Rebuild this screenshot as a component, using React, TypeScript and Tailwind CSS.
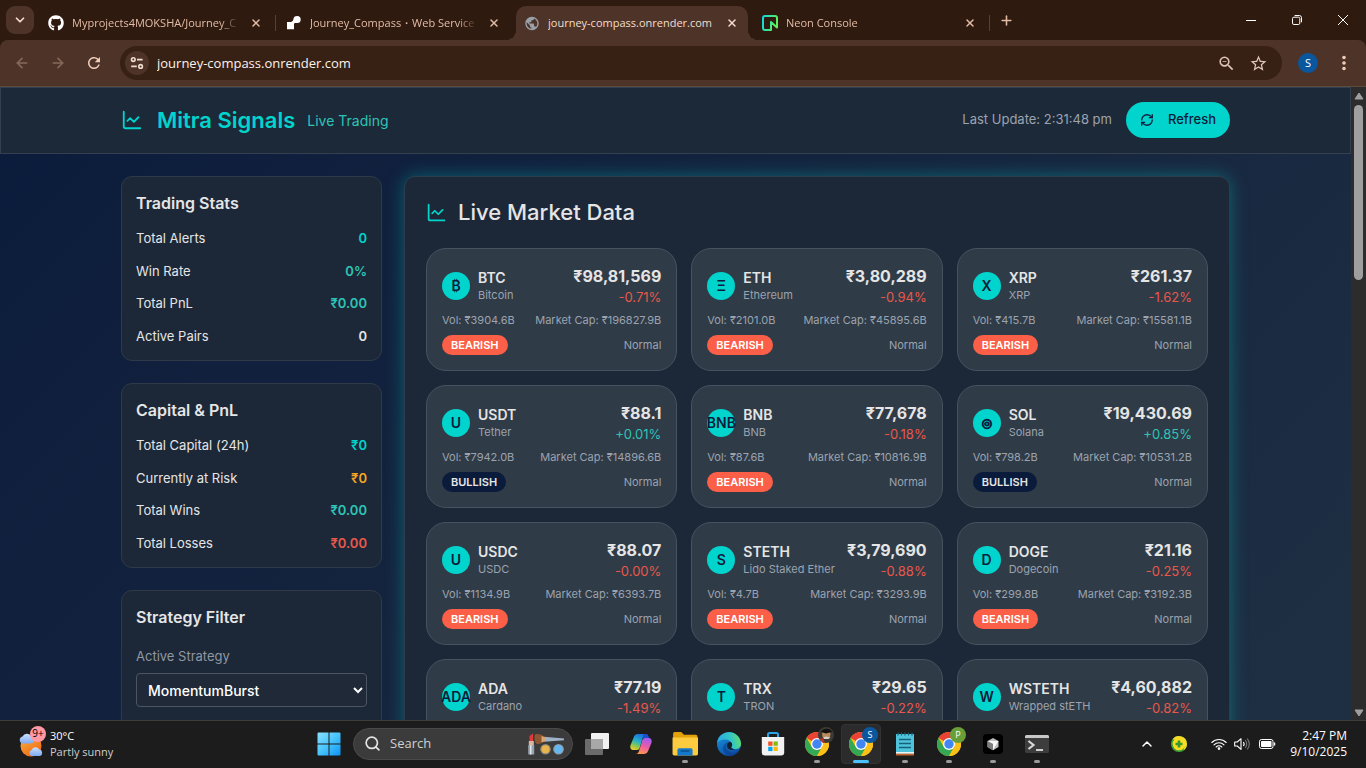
import React from "react";
import {
  ArrowLeft,
  ArrowRight,
  ChartLine,
  ChevronDown,
  ChevronUp,
  Plus,
  RefreshCw,
  Search,
  X,
} from "lucide-react";
import { FaGithub } from "react-icons/fa";
import { MdOutlineZoomOut, MdPublic, MdRefresh, MdStarOutline } from "react-icons/md";

const UI_FONT = "font-['Open_Sans','Noto_Sans',sans-serif]";

/* ---------- Browser chrome ---------- */

function RenderMark() {
  return (
    <svg viewBox="0 0 16 16" className="size-4" aria-hidden="true">
      <path
        fill="#fff"
        d="M11.2 1a3.9 3.9 0 0 0-3.9 3.4c-.2 1.1-.9 2-2 2.4-.4.1-.7.2-1.1.2H1v7.2h7V9.4c0-.9.7-1.4 1.6-1.4h1.6a3.5 3.5 0 0 0 0-7Z"
      />
    </svg>
  );
}

function NeonMark() {
  return (
    <svg viewBox="0 0 16 16" className="size-4" aria-hidden="true">
      <defs>
        <linearGradient id="neon" x1="0" y1="0" x2="1" y2="0.3">
          <stop offset="0" stopColor="#12d6dc" />
          <stop offset="1" stopColor="#5df05a" />
        </linearGradient>
      </defs>
      <path
        d="M9 15H3a2 2 0 0 1-2-2V3a2 2 0 0 1 2-2h10a2 2 0 0 1 2 2v9.6L9 7Z"
        fill="none"
        stroke="url(#neon)"
        strokeWidth="2"
        strokeLinejoin="round"
      />
    </svg>
  );
}

type TabProps = { icon: React.ReactNode; title: string; active?: boolean; divider?: boolean };

function Tab({ icon, title, active, divider }: TabProps) {
  return (
    <div className="flex h-[34px] w-[238px] min-w-0 items-center">
      <div
        className={
          active
            ? "relative flex h-full min-w-0 flex-1 items-center rounded-t-[10px] bg-[#4e3428] pr-2 pl-2 text-[#f3ddd0]"
            : "flex h-full min-w-0 flex-1 items-center pr-2 pl-2 text-[#e2bca6]"
        }
      >
        {active && (
          <>
            <span className="absolute bottom-0 -left-[10px] size-[10px] bg-[radial-gradient(circle_at_0_0,transparent_10px,#4e3428_10px)]" />
            <span className="absolute -right-[10px] bottom-0 size-[10px] bg-[radial-gradient(circle_at_100%_0,transparent_10px,#4e3428_10px)]" />
          </>
        )}
        <span className="mr-2 flex size-4 shrink-0 items-center justify-center">{icon}</span>
        <span
          className={
            active
              ? "mr-2 min-w-0 flex-1 overflow-hidden text-[11px] leading-6 whitespace-nowrap"
              : "mr-2 min-w-0 flex-1 overflow-hidden text-[11px] leading-6 whitespace-nowrap mask-[linear-gradient(to_right,#000_88%,transparent)]"
          }
        >
          {title}
        </span>
        <button type="button" aria-label="Close tab" className="flex h-5 w-4 shrink-0 items-center justify-center">
          <X className="size-3" strokeWidth={3} />
        </button>
      </div>
      <span className="flex w-[6px] justify-center">
        {divider && <span className="h-4 w-px bg-[#5b3f31]" />}
      </span>
    </div>
  );
}

function TabStrip() {
  return (
    <div className="flex h-10 items-start bg-[#2f1a0f] pt-[6px] pl-[6px]">
      <button
        type="button"
        aria-label="Search tabs"
        className="mr-[6px] flex size-7 shrink-0 items-center justify-center rounded-[9px] bg-[#4e3428] text-[#f3ddd0]"
      >
        <ChevronDown className="size-[14px]" strokeWidth={3} />
      </button>
      <div className="flex min-w-0 items-end">
        <Tab icon={<FaGithub className="size-4 text-white" />} title="Myprojects4MOKSHA/Journey_C" divider />
        <Tab icon={<RenderMark />} title="Journey_Compass・Web Service" />
        <Tab icon={<MdPublic className="size-[17px] text-[#9aa0a8]" />} title="journey-compass.onrender.com" active />
        <Tab icon={<NeonMark />} title="Neon Console" divider />
      </div>
      <button type="button" aria-label="New tab" className="flex size-7 shrink-0 items-center justify-center text-[#e2bca6]">
        <Plus className="size-[15px]" strokeWidth={2.5} />
      </button>
      <div className="ml-auto flex text-white">
        <button type="button" aria-label="Minimize" className="flex h-7 w-[46px] items-center justify-center">
          <svg viewBox="0 0 10 10" className="size-[10px]"><path d="M0 5.5h10" stroke="currentColor" /></svg>
        </button>
        <button type="button" aria-label="Restore" className="flex h-7 w-[46px] items-center justify-center">
          <svg viewBox="0 0 10 10" className="size-[10px]" fill="none" stroke="currentColor">
            <rect x="0.5" y="2.2" width="7.3" height="7.3" rx="1.4" />
            <path d="M2.6 .5h4.7a2.2 2.2 0 0 1 2.2 2.2v4.6" />
          </svg>
        </button>
        <button type="button" aria-label="Close" className="flex h-7 w-[46px] items-center justify-center">
          <svg viewBox="0 0 10 10" className="size-[10px]"><path d="M0 0l10 10M10 0L0 10" stroke="currentColor" /></svg>
        </button>
      </div>
    </div>
  );
}

function Toolbar() {
  return (
    <div className="flex h-[47px] items-center rounded-t-[8px] border-b border-[#5c4a3c] bg-[#4e3428] pl-1">
      <button type="button" aria-label="Back" className="flex w-9 justify-center text-[#87695b]">
        <ArrowLeft className="size-4" strokeWidth={2.4} />
      </button>
      <button type="button" aria-label="Forward" className="flex w-9 justify-center text-[#87695b]">
        <ArrowRight className="size-4" strokeWidth={2.4} />
      </button>
      <button type="button" aria-label="Reload" className="flex w-9 justify-center text-[#f0cdb9]">
        <MdRefresh className="size-[18px]" />
      </button>
      <div className="ml-2 flex h-[34px] min-w-0 flex-1 items-center rounded-full bg-[#372114] pr-2 pl-[5px] text-[#dcc5b8]">
        <button type="button" aria-label="Site information" className="flex size-6 shrink-0 items-center justify-center rounded-full bg-[#4e3428]">
          <svg viewBox="0 0 14 14" className="size-[14px]" fill="none" stroke="#f0ddd2" strokeWidth="1.6">
            <circle cx="3.3" cy="3.6" r="1.8" />
            <path d="M7 3.6h5.6M1.2 10.4h5.6" />
            <circle cx="10.6" cy="10.4" r="1.8" />
          </svg>
        </button>
        <input
          aria-label="Address"
          defaultValue="journey-compass.onrender.com"
          className="ml-2 h-6 min-w-0 flex-1 bg-transparent text-[13px] text-[#fdf1ea] outline-none"
        />
        <button type="button" aria-label="Zoom" className="flex w-8 justify-center">
          <MdOutlineZoomOut className="size-[19px]" />
        </button>
        <button type="button" aria-label="Bookmark" className="flex w-8 justify-center">
          <MdStarOutline className="size-[19px]" />
        </button>
      </div>
      <button type="button" aria-label="Profile" className="ml-4 flex size-5 items-center justify-center rounded-full bg-[#0a579f] text-[11px] text-white">
        S
      </button>
      <button type="button" aria-label="Menu" className="flex w-[48px] justify-center pl-1 text-[#f0cdb9]">
        <svg viewBox="0 0 4 16" className="h-4 w-1" fill="currentColor">
          <circle cx="2" cy="2.5" r="1.8" /><circle cx="2" cy="8" r="1.8" /><circle cx="2" cy="13.5" r="1.8" />
        </svg>
      </button>
    </div>
  );
}

/* ---------- Page ---------- */

function PageHeader() {
  return (
    <header className="border border-[#343f50] bg-[#1c2939]">
      <div className="mx-auto flex max-w-[1153px] items-center px-[22px] pt-[14px] pb-[15px]">
        <ChartLine className="size-[22px] text-[#00d4cc]" strokeWidth={2} />
        <h1 className="ml-[14px] text-[22px] leading-9 font-semibold text-[#00d4cc]">Mitra Signals</h1>
        <span className="ml-3 text-[14px] text-[#2ec4b6]">Live Trading</span>
        <span className="ml-auto text-[13px] text-[#9ca3af]">Last Update: 2:31:48 pm</span>
        <button type="button" className="ml-[14px] flex h-9 items-center rounded-full bg-[#00d4cc] px-[14px] text-[13px] font-medium text-[#0b1b3b]">
          <RefreshCw className="mr-[14px] size-[14px]" strokeWidth={2.2} />
          Refresh
        </button>
      </div>
    </header>
  );
}

type Stat = { label: string; value: string; tone: string };

const tradingStats: Stat[] = [
  { label: "Total Alerts", value: "0", tone: "text-[#00d4cc]" },
  { label: "Win Rate", value: "0%", tone: "text-[#2ec4b6]" },
  { label: "Total PnL", value: "₹0.00", tone: "text-[#2ec4b6]" },
  { label: "Active Pairs", value: "0", tone: "text-[#e5e5e5]" },
];

const capitalStats: Stat[] = [
  { label: "Total Capital (24h)", value: "₹0", tone: "text-[#00d4cc]" },
  { label: "Currently at Risk", value: "₹0", tone: "text-[#f5a623]" },
  { label: "Total Wins", value: "₹0.00", tone: "text-[#2ec4b6]" },
  { label: "Total Losses", value: "₹0.00", tone: "text-[#e8584a]" },
];

const SIDE_CARD = "rounded-[11px] border border-[#2e3a47] bg-[#1c2838] p-[14px]";

function StatCard({ title, stats }: { title: string; stats: Stat[] }) {
  return (
    <section className={SIDE_CARD}>
      <h2 className="text-[16px] leading-6 font-semibold">{title}</h2>
      <dl className="mt-[13px] flex h-[118px] flex-col justify-between text-[13px] leading-5">
        {stats.map((s) => (
          <div key={s.label} className="flex justify-between">
            <dt className="text-[#e5e5e5]">{s.label}</dt>
            <dd className={s.tone + " font-semibold"}>{s.value}</dd>
          </div>
        ))}
      </dl>
    </section>
  );
}

function StrategyCard() {
  return (
    <section className={SIDE_CARD}>
      <h2 className="text-[16px] leading-6 font-semibold">Strategy Filter</h2>
      <label htmlFor="strategy" className="mt-[17px] block text-[13px] leading-5 text-[#9097a1]">
        Active Strategy
      </label>
      <select
        id="strategy"
        className="mt-[7px] h-[34px] w-full rounded-[4px] border border-[#4b5563] bg-[#1f2937] px-[7px] text-[14px] font-medium text-white"
      >
        <option>MomentumBurst</option>
      </select>
      <div className="h-20" />
    </section>
  );
}

type Coin = [glyph: string, symbol: string, name: string, price: string, change: string, vol: string, cap: string, bullish?: boolean];

const coins: Coin[] = [
  ["₿", "BTC", "Bitcoin", "₹98,81,569", "-0.71%", "₹3904.6B", "₹196827.9B"],
  ["Ξ", "ETH", "Ethereum", "₹3,80,289", "-0.94%", "₹2101.0B", "₹45895.6B"],
  ["X", "XRP", "XRP", "₹261.37", "-1.62%", "₹415.7B", "₹15581.1B"],
  ["U", "USDT", "Tether", "₹88.1", "+0.01%", "₹7942.0B", "₹14896.6B", true],
  ["BNB", "BNB", "BNB", "₹77,678", "-0.18%", "₹87.6B", "₹10816.9B"],
  ["◎", "SOL", "Solana", "₹19,430.69", "+0.85%", "₹798.2B", "₹10531.2B", true],
  ["U", "USDC", "USDC", "₹88.07", "-0.00%", "₹1134.9B", "₹6393.7B"],
  ["S", "STETH", "Lido Staked Ether", "₹3,79,690", "-0.88%", "₹4.7B", "₹3293.9B"],
  ["D", "DOGE", "Dogecoin", "₹21.16", "-0.25%", "₹299.8B", "₹3192.3B"],
  ["ADA", "ADA", "Cardano", "₹77.19", "-1.49%", "₹98.4B", "₹2764.5B"],
  ["T", "TRX", "TRON", "₹29.65", "-0.22%", "₹74.1B", "₹2807.0B"],
  ["W", "WSTETH", "Wrapped stETH", "₹4,60,882", "-0.82%", "₹2.9B", "₹1496.3B"],
];

function CoinCard({ coin }: { coin: Coin }) {
  const [glyph, symbol, name, price, change, vol, cap, bullish] = coin;
  return (
    <article className="rounded-[20px] border border-[#475260] bg-[#2f3b47] px-[15px] pt-[15px] pb-[15px]">
      <div className="flex items-center justify-between">
        <div className="flex items-center gap-2">
          <span
            className={
              glyph === "◎"
                ? "flex size-7 items-center justify-center rounded-full bg-[#00d4cc] font-['DejaVu_Sans',sans-serif] text-[12px] font-bold text-[#0b1b3b] [-webkit-text-stroke:1px_#0b1b3b]"
                : "flex size-7 items-center justify-center rounded-full bg-[#00d4cc] text-[14px] font-semibold text-[#0b1b3b]"
            }
          >
            {glyph}
          </span>
          <div>
            <h3 className="text-[14px] leading-[19px] font-semibold">{symbol}</h3>
            <p className="text-[11px] leading-4 text-[#9ca3af]">{name}</p>
          </div>
        </div>
        <div className="text-right">
          <p className="text-[16px] leading-6 font-bold">{price}</p>
          <p className={bullish ? "text-[13px] leading-[19px] text-[#2ec4b6]" : "text-[13px] leading-[19px] text-[#e8584a]"}>
            {change}
          </p>
        </div>
      </div>
      <div className="mt-[5px] flex justify-between text-[11px] leading-4 text-[#9ca3af]">
        <span>Vol: {vol}</span>
        <span>Market Cap: {cap}</span>
      </div>
      <div className="mt-[7px] flex items-center justify-between text-[11px] leading-5">
        <span
          className={
            bullish
              ? "rounded-full bg-[#0b1b3b] px-[9px] font-semibold text-[#e5e5e5]"
              : "rounded-full bg-[#fb5f48] px-[9px] font-semibold text-white"
          }
        >
          {bullish ? "BULLISH" : "BEARISH"}
        </span>
        <span className="text-[#9ca3af]">Normal</span>
      </div>
    </article>
  );
}

function Dashboard() {
  return (
    <div className="min-w-0 flex-1 overflow-hidden bg-[linear-gradient(135deg,#0b1b3b_0%,#1f2f43_100%)] font-['Inter','Liberation_Sans',sans-serif] text-[#e5e5e5]">
      <PageHeader />
      <main className="mx-auto mt-[22px] grid max-w-[1153px] grid-cols-[261px_minmax(0,1fr)] items-start gap-[22px] px-[22px]">
        <div className="flex flex-col gap-[22px]">
          <StatCard title="Trading Stats" stats={tradingStats} />
          <StatCard title="Capital & PnL" stats={capitalStats} />
          <StrategyCard />
        </div>
        <section className="rounded-[11px] border border-[#2b3d4c] bg-[#1c2838] px-[21px] pt-5 pb-[21px] shadow-[0_0_18px_rgba(0,212,204,0.35)]">
          <h2 className="flex items-center gap-[11px] text-[22px] leading-[30px] font-medium">
            <ChartLine className="size-[21px] text-[#00d4cc]" strokeWidth={2} />
            Live Market Data
          </h2>
          <div className="mt-[21px] grid grid-cols-3 gap-[14px]">
            {coins.map((c) => (
              <CoinCard key={c[1]} coin={c} />
            ))}
          </div>
        </section>
      </main>
    </div>
  );
}

function ScrollBar() {
  return (
    <div className="flex w-[15px] shrink-0 flex-col items-center bg-[#2c2c2c] pt-[5px] pb-[3px] text-[#9f9f9f]" aria-hidden="true">
      <svg viewBox="0 0 10 8" className="h-2 w-[10px]"><path d="M5 1 9 7H1Z" fill="currentColor" stroke="currentColor" strokeLinejoin="round" /></svg>
      <div className="mt-[5px] h-[175px] w-[9px] rounded-full bg-[#9f9f9f]" />
      <svg viewBox="0 0 10 8" className="mt-auto h-2 w-[10px]"><path d="M5 7 9 1H1Z" fill="currentColor" stroke="currentColor" strokeLinejoin="round" /></svg>
    </div>
  );
}

/* ---------- Taskbar ---------- */

function WeatherIcon() {
  return (
    <svg viewBox="0 0 28 28" className="size-7" aria-hidden="true">
      <defs>
        <linearGradient id="sun" x1="0" y1="0" x2="0.6" y2="1"><stop offset="0" stopColor="#fbb53c" /><stop offset="1" stopColor="#ee6a1a" /></linearGradient>
        <linearGradient id="cloud" x1="0" y1="0" x2="0" y2="1"><stop offset="0" stopColor="#c9e0ff" /><stop offset="1" stopColor="#7fa9f0" /></linearGradient>
      </defs>
      <circle cx="13" cy="16" r="10.500" fill="url(#sun)" />
      <path d="M4.500 13.500a3.600 3.600 0 0 1 0-7 5 5 0 0 1 9 .4 3.400 3.400 0 0 1 .4 6.600Z" fill="url(#cloud)" />
      <path d="M13.500 26a3.200 3.200 0 0 1 0-6 4.200 4.200 0 0 1 7.700-.4A3.300 3.300 0 0 1 22 26Z" fill="url(#cloud)" />
    </svg>
  );
}

function WindowsLogo() {
  return (
    <svg viewBox="0 0 24 24" className="size-6">
      <defs><linearGradient id="win" gradientUnits="userSpaceOnUse" x1="0" y1="0" x2="24" y2="24"><stop offset="0" stopColor="#8be3ff" /><stop offset="0.5" stopColor="#48c4fb" /><stop offset="1" stopColor="#0a92f5" /></linearGradient></defs>
      <path fill="url(#win)" d="M.5 1.500a1 1 0 0 1 1-1h10v11H.5Zm12-1h10a1 1 0 0 1 1 1v10h-11ZM.5 12.500h11v11h-10a1 1 0 0 1-1-1Zm12 0h11v10a1 1 0 0 1-1 1h-10Z" />
    </svg>
  );
}

function Gleam() {
  return (
    <svg viewBox="0 0 38 22" className="h-[22px] w-[38px]" aria-hidden="true">
      <path d="M2.500 3 6 .5V8H2.500Z" fill="#e03a3a" />
      <rect x="1.800" y="8" width="5" height="4" fill="#d9b6a0" />
      <rect x="1.200" y="12" width="6" height="9.500" rx=".6" fill="#98a2ad" />
      <rect x="3" y="12" width="1.500" height="9.500" fill="#dfe5ea" />
      <path d="M17 3.800 37 5.600v1.600L17 8.800Z" fill="#9fb3c8" />
      <path d="M8 1.500c4-1.500 8 1 10 2.700v4c-2.500 1-5 3.500-8.500 2.600C7.500 9 7 4 8 1.500Z" fill="#8d5630" />
      <path d="M14.500 3 18 4.200v4L14.500 9.500Z" fill="#d6a571" />
      <circle cx="18.500" cy="16.200" r="5.300" fill="#8e887c" /><circle cx="18.500" cy="16.200" r="4" fill="#e8b44c" />
      <circle cx="31.500" cy="16.200" r="5.300" fill="#8aa0b3" /><circle cx="31.500" cy="16.200" r="4" fill="#63b8f2" />
    </svg>
  );
}

function TaskViewIcon() {
  return (
    <svg viewBox="0 0 24 24" className="size-6">
      <rect x="6" y="1" width="18" height="16" rx="1" fill="#f1f1f1" />
      <rect x="0" y="7" width="18" height="16" rx="1" fill="#6b6b6b" />
      <path d="M6 7h12v10H6Z" fill="#a8a8a8" />
    </svg>
  );
}

function CopilotIcon() {
  return (
    <svg viewBox="0 0 24 24" className="size-6">
      <defs>
        <linearGradient id="cpA" x1="0.6" y1="0" x2="0.2" y2="1"><stop offset="0" stopColor="#1b6fe0" /><stop offset="0.45" stopColor="#25b3c9" /><stop offset="0.75" stopColor="#8fcb4a" /><stop offset="1" stopColor="#f5c92e" /></linearGradient>
        <linearGradient id="cpB" x1="0.6" y1="0" x2="0.3" y2="1"><stop offset="0" stopColor="#a05cf0" /><stop offset="0.5" stopColor="#ee5aa6" /><stop offset="1" stopColor="#fb9a4c" /></linearGradient>
      </defs>
      <path d="M15.500 2H8.700C6.500 2 5.300 3.600 4.700 5.400L1.600 13c-1 3 .4 5 3 5H8c1.500 0 2.300-1 2.700-2.300L14 5c.6-2 1.500-3 3.300-3Z" fill="url(#cpA)" />
      <path d="M8.500 22h6.800c2.200 0 3.400-1.600 4-3.400l3.100-7.600c1-3-.4-5-3-5H16c-1.500 0-2.300 1-2.700 2.300L10 19c-.6 2-1.500 3-3.300 3Z" fill="url(#cpB)" />
      <path d="M14 5c.6-2 1.500-3 3.300-3 1.600 0 2.300 2 2.700 4h-4c-1.300 0-2 .6-2.500 1.600Z" fill="#1c4fd0" />
    </svg>
  );
}

function FolderIcon() {
  return (
    <svg viewBox="0 0 24 24" className="size-[26px]">
      <path d="M1 2.500a1.500 1.500 0 0 1 1.500-1.500h6L11 3.500h11A1.500 1.500 0 0 1 23.500 5v5H1Z" fill="#e3a008" />
      <path d="M.5 6h23.500v15a1.500 1.500 0 0 1-1.500 1.500H2A1.500 1.500 0 0 1 .5 21Z" fill="#fccb3f" />
      <path d="M5 22.500v-5A1.500 1.500 0 0 1 6.500 16h11a1.500 1.500 0 0 1 1.500 1.500v5Z" fill="#1579c9" />
      <path d="M8.500 18.500h7" stroke="#0b4f8c" strokeWidth="1.300" strokeLinecap="round" />
    </svg>
  );
}

function EdgeIcon() {
  return (
    <svg viewBox="0 0 24 24" className="size-6">
      <defs>
        <linearGradient id="edA" x1="0" y1="0.4" x2="1" y2="0.2"><stop offset="0" stopColor="#2aa9e8" /><stop offset="0.6" stopColor="#35c8c0" /><stop offset="1" stopColor="#69e255" /></linearGradient>
        <linearGradient id="edB" x1="0" y1="0" x2="0.5" y2="1"><stop offset="0" stopColor="#1a9be0" /><stop offset="1" stopColor="#0d4fa8" /></linearGradient>
      </defs>
      <circle cx="12" cy="12" r="12" fill="url(#edB)" />
      <path d="M.1 10.700A12 12 0 0 1 24 12c0 3.300-2.500 5.200-5.500 5.200-3.200 0-4.600-1.200-4.200-2.200 1-1.300 1-2.500.6-3.600C14 8.800 11.300 7.400 8 7.400c-3.600 0-6.600 1.400-7.900 3.300Z" fill="url(#edA)" />
      <path d="M12 10c-3 1.400-3.600 5-2 7.600 2 3 6.500 4.400 11.300 2A12 12 0 0 1 12.500 24C7 22.500 5.300 18 6.500 14.500 7.300 12 9.500 10.200 12 10Z" fill="#0b3f8f" opacity=".65" />
      <path d="M14.300 15c1-1.300 1-2.500.6-3.600-.5-1-1.500-1.500-2.700-1.400-2 1.200-2.600 3.200-2 5.200 1 2.300 4 3.400 8 2-2.800 0-4.300-1.200-3.900-2.200Z" fill="#17212c" />
    </svg>
  );
}

function StoreIcon() {
  return (
    <svg viewBox="0 0 24 24" className="size-6">
      <path d="M7 6V2.500A1.500 1.500 0 0 1 8.500 1h7A1.500 1.500 0 0 1 17 2.500V6" fill="none" stroke="#2aa3e8" strokeWidth="2" />
      <path d="M.8 5h22.400v15.500a3 3 0 0 1-3 3H3.800a3 3 0 0 1-3-3Z" fill="#f2f2f2" />
      <path d="M7.200 9.500h4.300v4.300H7.200Z" fill="#f35325" /><path d="M12.500 9.500h4.300v4.300h-4.300Z" fill="#81bc06" />
      <path d="M7.200 14.800h4.300v4.300H7.200Z" fill="#05a6f0" /><path d="M12.500 14.800h4.300v4.300h-4.300Z" fill="#ffba08" />
    </svg>
  );
}

function ChromeIcon() {
  return (
    <svg viewBox="0 0 24 24" className="size-6">
      <circle cx="12" cy="12" r="12" fill="#fbc116" />
      <path d="M12 12 1.600 6A12 12 0 0 1 22.400 6H12Z" fill="#ea4335" />
      <path d="M1.600 6A12 12 0 0 0 12 24l5.200-9L12 12 6.800 15Z" fill="#34a853" />
      <path d="M22.400 6H12v6l5.200 3L12 24A12 12 0 0 0 22.400 6Z" fill="#fbc116" />
      <circle cx="12" cy="12" r="6" fill="#fff" /><circle cx="12" cy="12" r="4.700" fill="#4285f4" />
    </svg>
  );
}

function NotepadIcon() {
  return (
    <svg viewBox="0 0 20 24" className="h-6 w-5">
      <path d="M1 2h18v20H1Z" fill="#4fc3dc" />
      <path d="M1 20h18v1.700H1Z" fill="#f2f2f2" /><path d="M1 21.700h18v1.800H1Z" fill="#c0622d" />
      <path d="M4 7.500h12M4 11.500h12M4 15.500h12" stroke="#14617a" strokeWidth="1.500" />
      <path d="M3 .5v3M6.500.5v3M10 .5v3M13.500.5v3M17 .5v3" stroke="#14617a" strokeWidth="1.200" />
    </svg>
  );
}

function CursorIcon() {
  return (
    <svg viewBox="0 0 20 20" className="size-5">
      <rect width="20" height="20" rx="4" fill="#000" />
      <path d="m10 4 5.500 3v6L10 16.200 4.500 13V7Z" fill="#bdbdbd" />
      <path d="M4.500 7h11L10 16.200V10Z" fill="#f5f5f5" /><path d="M4.500 7 10 10v6.200L4.500 13Z" fill="#7d7d7d" />
    </svg>
  );
}

function TerminalIcon() {
  return (
    <svg viewBox="0 0 24 20" className="h-5 w-6">
      <rect width="24" height="18" y="1" rx="1.500" fill="#3d3d3d" />
      <path d="M0 2.500A1.500 1.500 0 0 1 1.500 1h21A1.500 1.500 0 0 1 24 2.500V4H0Z" fill="#c8c8c8" />
      <path d="m3.500 7 5 4-5 4" fill="none" stroke="#d8d8d8" strokeWidth="2.200" />
      <path d="M11 16h7" stroke="#fff" strokeWidth="1.500" />
    </svg>
  );
}

type AppProps = { label: string; children: React.ReactNode; running?: boolean; active?: boolean; badge?: React.ReactNode };

function TaskApp({ label, children, running, active, badge }: AppProps) {
  return (
    <button type="button" aria-label={label} className="relative flex h-[45px] w-11 items-center justify-center">
      {active && <span className="absolute inset-x-[2px] top-[3px] bottom-[2px] rounded-[4px] border border-[#333] bg-[#2b2b2b]" />}
      <span className="relative">{children}</span>
      {badge && <span className="absolute top-[6px] right-[5px]">{badge}</span>}
      {running && <span className="absolute bottom-[3px] h-[3px] w-[6px] rounded-full bg-[#9a9a9a]" />}
      {active && <span className="absolute bottom-[3px] h-[3px] w-4 rounded-full bg-[#4cc2ff]" />}
    </button>
  );
}

function PortraitBadge() {
  return (
    <svg viewBox="0 0 16 16" className="size-4">
      <circle cx="8" cy="8" r="8" fill="#3c3a35" />
      <path d="M4 6.500c1-3.500 7-4 8.500-.5l-.5 4-4 2-3.500-2Z" fill="#b98a5c" />
      <path d="M3 5c2-4 9-4.500 11 0L8 6.500Z" fill="#14120f" />
      <path d="M5 10.500 8 9.500l4.500 1-2 1.500H6Z" fill="#d9cfc4" /><path d="M1.500 12 5 11l2 5H5Z" fill="#b5332d" />
    </svg>
  );
}

function Taskbar() {
  return (
    <footer className="flex h-12 shrink-0 items-center border-t border-[#3d3d3a] bg-[#1c1c1c] pb-[2px] text-[12px] text-white">
      <div className="flex min-w-0 flex-1 items-center pl-[18px]">
        <div className="relative">
          <WeatherIcon />
          <span className="absolute -top-1 left-3 flex size-4 items-center justify-center rounded-full bg-[#ff99a4] text-[10px] text-black">9+</span>
        </div>
        <div className="ml-1 text-[11px] leading-4">
          <p>30°C</p>
          <p className="text-[#cfcfcf]">Partly sunny</p>
        </div>
      </div>
      <div className="flex items-center pl-px">
        <TaskApp label="Start"><WindowsLogo /></TaskApp>
        <label className="mx-[2px] flex h-8 w-[220px] items-center rounded-full border border-[#4a4a4a] bg-[#3b3b3b] pr-[7px] pl-[10px]">
          <Search className="size-[17px] shrink-0 text-[#e4e4e4]" strokeWidth={2.4} />
          <input aria-label="Search" placeholder="Search" className="ml-[9px] min-w-0 flex-1 bg-transparent text-[13px] outline-none placeholder:text-[#d0d0d0]" />
          <Gleam />
        </label>
        <TaskApp label="Task view"><TaskViewIcon /></TaskApp>
        <TaskApp label="Copilot"><CopilotIcon /></TaskApp>
        <TaskApp label="File Explorer" running><FolderIcon /></TaskApp>
        <TaskApp label="Edge"><EdgeIcon /></TaskApp>
        <TaskApp label="Store"><StoreIcon /></TaskApp>
        <TaskApp label="Chrome" running badge={<PortraitBadge />}><ChromeIcon /></TaskApp>
        <TaskApp
          label="Chrome, S profile"
          active
          badge={<span className="flex size-4 items-center justify-center rounded-full bg-[#0a579f] text-[9px] leading-3">S</span>}
        >
          <ChromeIcon />
        </TaskApp>
        <TaskApp label="Notepad" running><NotepadIcon /></TaskApp>
        <TaskApp
          label="Chrome, P profile"
          running
          badge={<span className="flex size-4 items-center justify-center rounded-full bg-[#689f38] text-[9px] leading-3">P</span>}
        >
          <ChromeIcon />
        </TaskApp>
        <TaskApp label="Cursor" running><CursorIcon /></TaskApp>
        <TaskApp label="Terminal" running><TerminalIcon /></TaskApp>
      </div>
      <div className="flex min-w-0 flex-1 items-center justify-end pr-[19px]">
        <ChevronUp className="size-4" strokeWidth={2.2} />
        <svg viewBox="0 0 16 16" className="ml-4 size-4">
          <circle cx="8" cy="8" r="8" fill="#3fa535" />
          <path d="M1.500 3.500A8 8 0 0 1 16 8c0 3-1.500 5-3.500 6.500C15 8 11 3 1.500 3.500Z" fill="#f6d92b" />
          <circle cx="8" cy="8" r="6.300" fill="#fbdc20" />
          <path d="M8 4.500v7M4.500 8h7" stroke="#2f9a34" strokeWidth="2.600" />
        </svg>
        <svg viewBox="0 0 16 12" className="ml-6 h-3 w-4" fill="none" stroke="#fff" strokeWidth="1.100" strokeLinecap="round">
          <path d="M.8 4.500a10.200 10.200 0 0 1 14.400 0M3 6.800a7 7 0 0 1 10 0M5.200 9a4 4 0 0 1 5.600 0" />
          <circle cx="8" cy="10.600" r=".8" fill="#fff" />
        </svg>
        <svg viewBox="0 0 16 14" className="ml-[7px] h-[14px] w-4" fill="none" stroke="#fff" strokeWidth="1.100" strokeLinejoin="round">
          <path d="M.7 5v4h2.600L7 12.300V1.700L3.300 5Z" />
          <path d="M9.300 5a3 3 0 0 1 0 4" />
          <path d="M11.200 3.200a5.500 5.500 0 0 1 0 7.600M13.200 1.600a8 8 0 0 1 0 10.800" stroke="#777" />
        </svg>
        <svg viewBox="0 0 17 10" className="ml-[9px] h-[10px] w-[17px]" fill="none" stroke="#fff">
          <rect x=".5" y=".5" width="13.500" height="9" rx="2" />
          <rect x="2" y="2" width="10.500" height="6" rx=".8" fill="#fff" stroke="none" />
          <path d="M15.500 3.500v3" strokeWidth="1.400" />
        </svg>
        <div className="ml-[14px] text-right leading-4">
          <p>2:47 PM</p>
          <p>9/10/2025</p>
        </div>
      </div>
    </footer>
  );
}

export default function App() {
  return (
    <div className={"flex h-screen flex-col overflow-hidden bg-[#1c1c1c] " + UI_FONT}>
      <div className="shrink-0 bg-[#2f1a0f]">
        <TabStrip />
        <Toolbar />
      </div>
      <div className="flex min-h-0 flex-1">
        <Dashboard />
        <ScrollBar />
      </div>
      <Taskbar />
    </div>
  );
}
